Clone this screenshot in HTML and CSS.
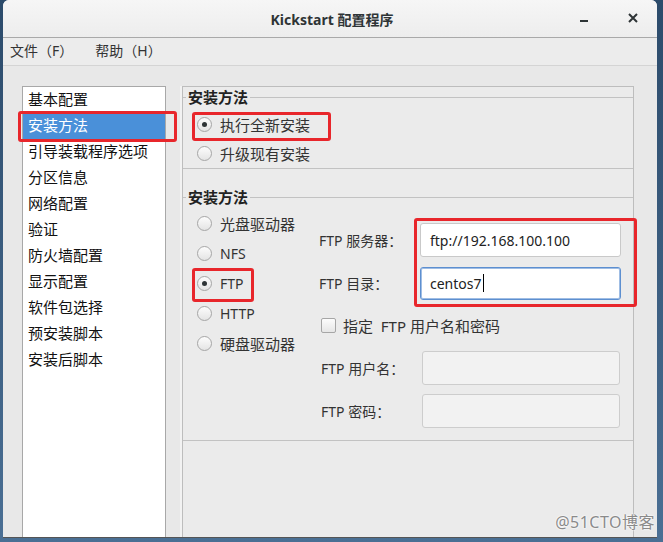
FILE: index.html
```html
<!DOCTYPE html>
<html lang="zh-CN">
<head>
    <meta charset="UTF-8">
    <title>Kickstart 配置程序</title>
    <link rel="stylesheet" href="styles.css">
</head>
<body>
    <div class="window">
        <!-- Title bar -->
        <div class="titlebar">
            <span class="title">Kickstart 配置程序</span>
            <div class="controls">
                <svg width="10" height="10" viewBox="0 0 10 10"><rect x="1" y="7" width="8" height="2" fill="#2e3436"/></svg>
                <svg width="12" height="12" viewBox="0 0 12 12"><path d="M2 2 L10 10 M10 2 L2 10" stroke="#2e3436" stroke-width="2"/></svg>
            </div>
        </div>

        <!-- Menu bar -->
        <div class="menubar">
            <span>文件（F）</span>
            <span>帮助（H）</span>
        </div>

        <div class="content">
            <!-- Category list -->
            <ul class="category-list">
                <li>基本配置</li>
                <li class="selected">安装方法</li>
                <li>引导装载程序选项</li>
                <li>分区信息</li>
                <li>网络配置</li>
                <li>验证</li>
                <li>防火墙配置</li>
                <li>显示配置</li>
                <li>软件包选择</li>
                <li>预安装脚本</li>
                <li>安装后脚本</li>
            </ul>

            <div class="separator"></div>

            <!-- Right pane -->
            <div class="pane">
                <fieldset class="frame frame-first">
                    <legend>安装方法</legend>
                    <div class="radio-row"><span class="radio checked"></span>执行全新安装</div>
                    <div class="radio-row"><span class="radio"></span>升级现有安装</div>
                </fieldset>

                <fieldset class="frame frame-second">
                    <legend>安装方法</legend>
                    <div class="method-grid">
                        <div class="methods">
                            <div class="radio-row tall"><span class="radio"></span>光盘驱动器</div>
                            <div class="radio-row tall latin"><span class="radio"></span>NFS</div>
                            <div class="radio-row tall latin"><span class="radio checked"></span>FTP</div>
                            <div class="radio-row tall latin"><span class="radio"></span>HTTP</div>
                            <div class="radio-row tall"><span class="radio"></span>硬盘驱动器</div>
                        </div>

                        <div class="ftp-form">
                            <div class="form-row">
                                <label>FTP 服务器：</label>
                                <div class="entry">ftp://192.168.100.100</div>
                            </div>
                            <div class="form-row">
                                <label>FTP 目录：</label>
                                <div class="entry focused">centos7<span class="caret"></span></div>
                            </div>
                            <div class="check-row">
                                <span class="checkbox"></span>指定&nbsp; FTP 用户名和密码
                            </div>
                            <div class="form-row indent">
                                <label>FTP 用户名：</label>
                                <div class="entry disabled"></div>
                            </div>
                            <div class="form-row indent">
                                <label>FTP 密码：</label>
                                <div class="entry disabled"></div>
                            </div>
                        </div>
                    </div>
                </fieldset>
            </div>
        </div>
    </div>

    <!-- Annotation boxes drawn over the screenshot -->
    <div class="mark mark-list"></div>
    <div class="mark mark-new"></div>
    <div class="mark mark-ftp"></div>
    <div class="mark mark-entries"></div>

    <div class="watermark">@51CTO博客</div>
</body>
</html>
```

FILE: styles.css
```css
* {
    margin: 0;
    padding: 0;
    box-sizing: border-box;
}

body {
    position: relative;
    width: 663px;
    height: 542px;
    overflow: hidden;
    background: linear-gradient(180deg, #2c4b6b, #4a6f94);
    font-family: "Noto Sans", "Noto Sans CJK SC", sans-serif;
    color: #2e3436;
    padding-left: 3px;
}

.window {
    width: 654px;
    height: 538px;
    background-color: #e8e8e8;
    border-radius: 6px 6px 0 0;
    overflow: hidden;
    border-bottom: 1px solid #555;
}

/* Title bar */
.titlebar {
    height: 38px;
    background: linear-gradient(180deg, #f6f6f6, #ededed);
    border-bottom: 1px solid #a9a9a9;
    display: flex;
    align-items: center;
    justify-content: center;
    position: relative;
}

.title {
    font-size: 14px;
    font-weight: bold;
    color: #2e3436;
    margin-left: 4px;
}

.controls {
    position: absolute;
    right: 18px;
    top: 12px;
    display: flex;
    align-items: center;
    gap: 38px;
}

/* Menu bar */
.menubar {
    height: 28px;
    background-color: #ececec;
    border-bottom: 1px solid #d4d4d4;
    display: flex;
    align-items: center;
    padding-left: 7px;
    padding-bottom: 3px;
    gap: 22px;
    font-size: 14px;
    color: #333;
}

/* Content */
.content {
    display: flex;
    padding: 20px 0 0 19px;
    height: 472px;
}

.category-list {
    list-style: none;
    width: 144px;
    height: 452px;
    background-color: #fff;
    border: 1px solid #a8a8a8;
    font-family: "Noto Sans CJK SC", sans-serif;
    font-size: 15px;
    color: #111;
}

.category-list li {
    height: 26px;
    line-height: 24px;
    padding-left: 5px;
}

.category-list li.selected {
    background-color: #4a90d9;
    color: #fff;
}

.separator {
    width: 16px;
    border-right: 2px solid #f2f2f2;
}

.pane {
    width: 452px;
    height: 452px;
    border: 1px solid #bdbdbd;
    border-bottom: none;
    background-color: #ebebeb;
}

/* Frames */
.frame {
    border: none;
    border-top: 1px solid #c2c2c2;
    border-bottom: 1px solid #c2c2c2;
    padding: 0 0 0 14px;
}

.frame legend {
    font-family: "Noto Sans CJK SC", sans-serif;
    font-size: 15px;
    font-weight: bold;
    line-height: 20px;
    margin-left: -11px;
    padding: 0 2px;
    color: #222;
}

.frame-first {
    padding-top: 3px;
    height: 82px;
}

.frame-second {
    margin-top: 18px;
    padding-top: 1px;
    height: 254px;
}

.radio-row {
    display: flex;
    align-items: center;
    height: 29px;
    font-family: "Noto Sans CJK SC", sans-serif;
    font-size: 15px;
    color: #333;
}

.radio-row.tall {
    height: 30px;
}

.radio-row.latin {
    font-family: "Noto Sans", sans-serif;
    font-size: 14px;
}

.radio {
    width: 15px;
    height: 15px;
    border-radius: 50%;
    border: 1px solid #a6a6a6;
    background: linear-gradient(180deg, #fcfcfc, #e4e4e4);
    margin-right: 8px;
    display: flex;
    align-items: center;
    justify-content: center;
}

.radio.checked::after {
    content: "";
    width: 5px;
    height: 5px;
    border-radius: 50%;
    background-color: #2e3436;
}

.method-grid {
    display: flex;
}

.methods {
    width: 122px;
}

/* FTP form */
.ftp-form {
    padding-top: 15px;
}

.form-row {
    display: flex;
    align-items: center;
    height: 34px;
    margin-bottom: 9px;
}

.form-row label {
    width: 101px;
    font-size: 14px;
    color: #333;
}

.form-row.indent {
    padding-left: 2px;
}

.form-row.indent .entry {
    width: 198px;
}

.entry {
    width: 201px;
    height: 34px;
    border: 1px solid #c9c9c9;
    border-radius: 3px;
    background-color: #fff;
    font-size: 14px;
    color: #222;
    padding-left: 9px;
    display: flex;
    align-items: center;
}

.entry.focused {
    border: 1px solid #5d8fd0;
    box-shadow: inset 0 0 0 1px #9fbde4;
    height: 33px;
}

.entry.disabled {
    background-color: #f2f2f2;
    border-color: #cdcdcd;
}

.caret {
    width: 1px;
    height: 18px;
    background-color: #000;
    margin-left: 1px;
}

.check-row {
    display: flex;
    align-items: center;
    height: 32px;
    margin-bottom: 10px;
    padding-left: 2px;
    font-size: 15px;
    color: #333;
}

.checkbox {
    width: 15px;
    height: 15px;
    border: 1px solid #a6a6a6;
    border-radius: 2px;
    background: linear-gradient(180deg, #fcfcfc, #e6e6e6);
    margin-right: 7px;
}

/* Red annotation boxes */
.mark {
    position: absolute;
    border: 3px solid #e8262b;
    border-radius: 3px;
}

.mark-list {
    left: 18px;
    top: 111px;
    width: 159px;
    height: 31px;
}

.mark-new {
    left: 192px;
    top: 112px;
    width: 139px;
    height: 29px;
}

.mark-ftp {
    left: 192px;
    top: 268px;
    width: 62px;
    height: 34px;
}

.mark-entries {
    left: 414px;
    top: 218px;
    width: 223px;
    height: 89px;
}

.watermark {
    position: absolute;
    right: 8px;
    bottom: 9px;
    font-size: 16px;
    letter-spacing: 0.5px;
    color: #8a8a8a;
    text-shadow: 0 0 2px #fff, 0 0 2px #fff;
}
```
